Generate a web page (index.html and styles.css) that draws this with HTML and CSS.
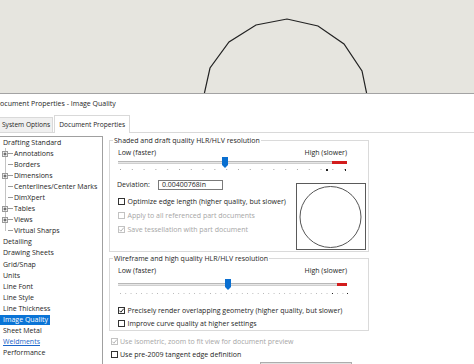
FILE: index.html
```html
<!DOCTYPE html>
<html lang="en">
<head>
  <meta charset="UTF-8">
  <title>Document Properties - Image Quality</title>
  <link rel="stylesheet" href="styles.css">
</head>
<body>

  <div class="viewport">
    <svg width="474" height="94" viewBox="0 0 474 94">
      <polyline points="204,95 210,68 229,42 256,25 287,19 318,26 344,44 362,71 367,95" fill="none" stroke="#222" stroke-width="1.2"/>
    </svg>
  </div>

  <div class="titlebar"><span class="title">Document Properties - Image Quality</span></div>

  <div class="tabs">
    <div class="tab">System Options</div>
    <div class="tab active">Document Properties</div>
  </div>

  <div class="content">
    <ul class="tree">
      <li>Drafting Standard</li>
      <li class="child"><span class="twig plus"><svg width="6" height="6" viewBox="0 0 6 6"><rect x="0.5" y="0.5" width="5" height="5" fill="#f4f4f4" stroke="#9a9a9a"/><path d="M1.5 3H4.5M3 1.5V4.5" stroke="#444"/></svg></span>Annotations</li>
      <li class="child"><span class="twig"></span>Borders</li>
      <li class="child"><span class="twig plus"><svg width="6" height="6" viewBox="0 0 6 6"><rect x="0.5" y="0.5" width="5" height="5" fill="#f4f4f4" stroke="#9a9a9a"/><path d="M1.5 3H4.5M3 1.5V4.5" stroke="#444"/></svg></span>Dimensions</li>
      <li class="child"><span class="twig"></span>Centerlines/Center Marks</li>
      <li class="child"><span class="twig"></span>DimXpert</li>
      <li class="child"><span class="twig plus"><svg width="6" height="6" viewBox="0 0 6 6"><rect x="0.5" y="0.5" width="5" height="5" fill="#f4f4f4" stroke="#9a9a9a"/><path d="M1.5 3H4.5M3 1.5V4.5" stroke="#444"/></svg></span>Tables</li>
      <li class="child"><span class="twig plus"><svg width="6" height="6" viewBox="0 0 6 6"><rect x="0.5" y="0.5" width="5" height="5" fill="#f4f4f4" stroke="#9a9a9a"/><path d="M1.5 3H4.5M3 1.5V4.5" stroke="#444"/></svg></span>Views</li>
      <li class="child"><span class="twig last"></span>Virtual Sharps</li>
      <li>Detailing</li>
      <li>Drawing Sheets</li>
      <li>Grid/Snap</li>
      <li>Units</li>
      <li>Line Font</li>
      <li>Line Style</li>
      <li>Line Thickness</li>
      <li class="selected"><span>Image Quality</span></li>
      <li>Sheet Metal</li>
      <li class="link">Weldments</li>
      <li>Performance</li>
    </ul>

    <div class="settings">
      <fieldset class="group shaded">
        <legend>Shaded and draft quality HLR/HLV resolution</legend>
        <div class="scale-labels"><span>Low (faster)</span><span>High (slower)</span></div>
        <div class="slider">
          <div class="track"></div>
          <svg class="thumb" width="6" height="11" viewBox="0 0 6 11"><polygon points="0,0 6,0 6,8 3,11 0,8" fill="#0a6fd0"/></svg>
          <div class="track"></div>
          <div class="track-red wide"></div>
        </div>
        <div class="ticks coarse"><i class="d1"></i><i></i></div>
        <div class="lower">
          <div class="options">
            <div class="deviation"><span>Deviation:</span><div class="field">0.00400768in</div></div>
            <div class="check"><span class="box"></span>Optimize edge length (higher quality, but slower)</div>
            <div class="check disabled"><span class="box"></span>Apply to all referenced part documents</div>
            <div class="check disabled"><span class="box"><svg width="7" height="7" viewBox="0 0 7 7"><polyline points="1.3,3.6 2.9,5.2 5.8,1.6" fill="none" stroke="#b5b5b5" stroke-width="1"/></svg></span>Save tessellation with part document</div>
          </div>
          <div class="preview">
            <svg width="67" height="64" viewBox="0 0 67 64"><circle cx="33.5" cy="33" r="30.5" fill="none" stroke="#555" stroke-width="1"/></svg>
          </div>
        </div>
      </fieldset>

      <fieldset class="group wire">
        <legend>Wireframe and high quality HLR/HLV resolution</legend>
        <div class="scale-labels"><span>Low (faster)</span><span>High (slower)</span></div>
        <div class="slider">
          <div class="track"></div>
          <svg class="thumb" width="6" height="11" viewBox="0 0 6 11"><polygon points="0,0 6,0 6,8 3,11 0,8" fill="#0a6fd0"/></svg>
          <div class="track"></div>
          <div class="track-red"></div>
        </div>
        <div class="ticks fine"><i class="d2"></i><i></i></div>
        <div class="check first"><span class="box"><svg width="7" height="7" viewBox="0 0 7 7"><polyline points="1.3,3.6 2.9,5.2 5.8,1.6" fill="none" stroke="#222" stroke-width="1"/></svg></span>Precisely render overlapping geometry (higher quality, but slower)</div>
        <div class="check"><span class="box"></span>Improve curve quality at higher settings</div>
      </fieldset>

      <div class="check outer disabled"><span class="box"><svg width="7" height="7" viewBox="0 0 7 7"><polyline points="1.3,3.6 2.9,5.2 5.8,1.6" fill="none" stroke="#b5b5b5" stroke-width="1"/></svg></span>Use isometric, zoom to fit view for document preview</div>
      <div class="check outer"><span class="box"></span>Use pre-2009 tangent edge definition</div>
      <div class="button-row"><div class="btn"></div></div>
    </div>
  </div>

</body>
</html>
```

FILE: styles.css
```css
* {
  margin: 0;
  padding: 0;
  box-sizing: border-box;
}

body {
  width: 474px;
  height: 364px;
  overflow: hidden;
  background: #fff;
  color: #1e1e1e;
  font-family: 'Open Sans', sans-serif;
  font-size: 7px;
}

/* CAD viewport */
.viewport {
  height: 94px;
  background: #e6e5df;
  border-bottom: 1px solid #a3a3a3;
  overflow: hidden;
}

.viewport svg {
  display: block;
}

/* Dialog header */
.titlebar {
  height: 21px;
  line-height: 20px;
  font-size: 7px;
  white-space: nowrap;
  overflow: hidden;
}

.title {
  margin-left: -5px;
}

.tabs {
  height: 18px;
  display: flex;
  align-items: flex-end;
  font-size: 6.6px;
  border-bottom: 1px solid #d9d9d9;
}

.tab {
  height: 15px;
  line-height: 13px;
  padding: 0 2px;
  margin-left: -1px;
  background: #f0f0f0;
  border: 1px solid #d9d9d9;
  border-bottom: none;
  white-space: nowrap;
}

.tab.active {
  height: 18px;
  line-height: 17px;
  margin-left: 1px;
  margin-bottom: -1px;
  padding: 0 4px;
  background: #fff;
}

/* Main area */
.content {
  display: flex;
}

.tree {
  list-style: none;
  width: 103px;
  height: 230px;
  margin-top: 3px;
  border-top: 1px solid #a0a0a0;
  border-right: 1px solid #a0a0a0;
}

.tree li {
  height: 11.05px;
  line-height: 11px;
  padding-left: 3px;
  white-space: nowrap;
}

.tree li.child {
  padding-left: 0;
  display: flex;
}

.twig {
  display: block;
  width: 14px;
  height: 11.05px;
  flex: none;
  background:
    linear-gradient(#c4c4c4, #c4c4c4) 5px 0 / 1px 100% no-repeat,
    linear-gradient(#9a9a9a, #9a9a9a) 8px 5px / 5px 1px no-repeat;
}

.twig.last {
  background:
    linear-gradient(#c4c4c4, #c4c4c4) 5px 0 / 1px 6px no-repeat,
    linear-gradient(#9a9a9a, #9a9a9a) 8px 5px / 5px 1px no-repeat;
}

.twig.plus svg {
  display: block;
  margin: 3px 0 0 2px;
}

.tree li.selected {
  padding-left: 0;
}

.tree li.selected span {
  display: inline-block;
  height: 10px;
  line-height: 10px;
  padding: 0 2px 0 3px;
  background: #0a74d6;
  color: #fff;
}

.tree li.link {
  color: #1a64c8;
  text-decoration: underline;
}

/* Settings column */
.settings {
  flex: 1;
  padding: 2px 0 0 6px;
}

.group {
  width: 260px;
  border: 1px solid #dadada;
  padding: 2px 2px 1px 8px;
}

.group legend {
  line-height: 11px;
  margin-left: -5px;
  padding: 0 1px;
  color: #262626;
}

.scale-labels {
  width: 229px;
  height: 9px;
  line-height: 9px;
  display: flex;
  justify-content: space-between;
}

.slider {
  width: 229px;
  height: 11px;
  display: flex;
  align-items: center;
}

.track {
  flex: 1;
  height: 3px;
  background: #e6e6e6;
  border-top: 1px solid #b8b8b8;
  border-bottom: 1px solid #cfcfcf;
}

.thumb {
  display: block;
  flex: none;
}

.track-red {
  width: 10px;
  height: 3px;
  background: #d21c1c;
}

.track-red.wide {
  width: 15px;
}

.ticks {
  width: 229px;
  height: 2px;
  display: flex;
  align-items: flex-start;
}

.shaded .ticks {
  margin-top: 1px;
}

.ticks.coarse {
  background: linear-gradient(90deg, #a8a8a8 1px, transparent 1px) 2px 0 / 11.8px 1px repeat-x;
}

.ticks.fine {
  background: linear-gradient(90deg, #b4b4b4 1px, transparent 1px) 2px 0 / 5.3px 1px repeat-x;
}

.ticks i {
  display: block;
  width: 1.5px;
  height: 1.5px;
  margin-left: 17px;
  background: #222;
}

.ticks i.d1 {
  margin-left: 208px;
}

.ticks i.d2 {
  margin-left: 214px;
  margin-right: -3px;
}

.lower {
  display: flex;
  justify-content: space-between;
}

.options {
  padding-top: 8.5px;
}

.deviation {
  height: 10px;
  display: flex;
  align-items: center;
  margin-left: -1px;
  margin-bottom: 4.5px;
}

.deviation span {
  width: 41px;
}

.field {
  width: 65px;
  height: 10px;
  line-height: 8px;
  padding-left: 3px;
  border: 1px solid #7a7a7a;
  background: #fff;
}

.check {
  height: 14.3px;
  display: flex;
  align-items: center;
  gap: 2.5px;
  white-space: nowrap;
}

.box {
  width: 7px;
  height: 7px;
  flex: none;
  border: 1px solid #333;
  background: #fff;
  display: flex;
  align-items: center;
  justify-content: center;
}

.box svg {
  display: block;
  flex: none;
}

.check.disabled {
  color: #a6a6a6;
}

.check.disabled .box {
  border-color: #c2c2c2;
}

.preview {
  width: 70px;
  height: 67px;
  margin-top: 11.5px;
  border: 1.5px solid #5a5a5a;
  background: #fff;
}

.preview svg {
  display: block;
}

/* second group */
.group.wire {
  margin-top: 1.5px;
  padding-top: 0;
  padding-bottom: 0;
}

.wire .scale-labels {
  margin-top: 2px;
}

.wire .slider {
  margin-top: 3.5px;
}

.wire .ticks {
  margin-top: 3px;
}

.wire .check {
  height: 13px;
}

.wire .check.first {
  margin-top: 9.5px;
}

.check.outer {
  height: 13px;
  margin-left: 1.5px;
}

.check.outer.disabled {
  margin-top: 4px;
}

.button-row {
  padding: 0.5px 0 0 151px;
}

.btn {
  width: 92px;
  height: 12px;
  border: 1px solid #adadad;
  background: #e1e1e1;
}
```
